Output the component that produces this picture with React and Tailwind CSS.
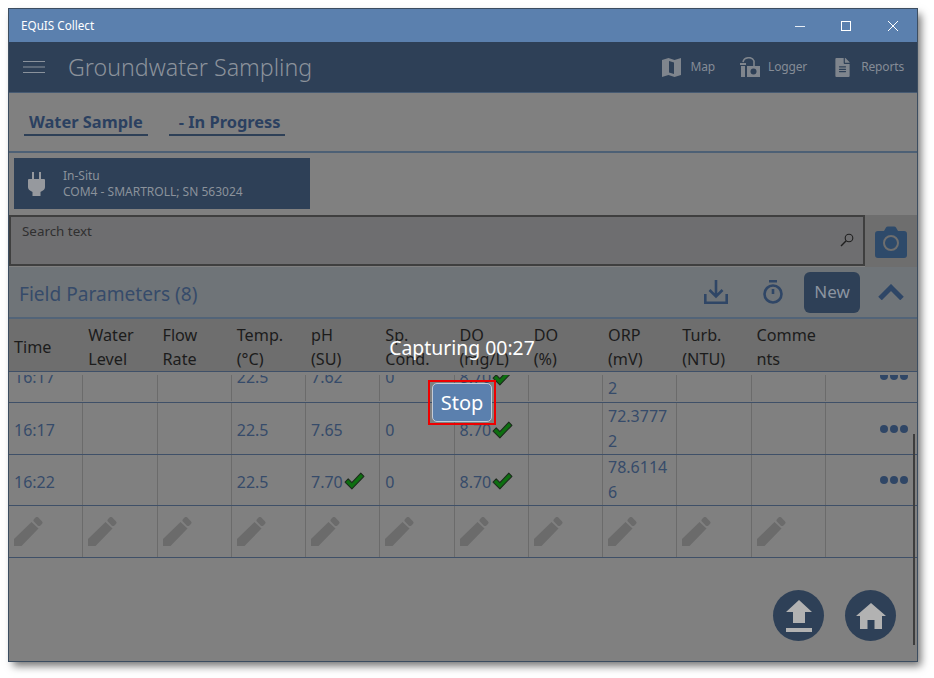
import { FaFileAlt } from 'react-icons/fa';

const font = { fontFamily: '"Noto Sans", "Open Sans", sans-serif' };

const headers = [
  ['Time'],
  ['Water', 'Level'],
  ['Flow', 'Rate'],
  ['Temp.', '(°C)'],
  ['pH', '(SU)'],
  ['Sp.', 'Cond.'],
  ['DO', '(mg/L)'],
  ['DO', '(%)'],
  ['ORP', '(mV)'],
  ['Turb.', '(NTU)'],
  ['Comme', 'nts'],
  [],
];

const rows = [
  { time: '16:17', temp: '22.5', ph: '7.62', cond: '0', doVal: '8.70', orp: ['', '2'], phOk: false },
  { time: '16:17', temp: '22.5', ph: '7.65', cond: '0', doVal: '8.70', orp: ['72.3777', '2'], phOk: false },
  { time: '16:22', temp: '22.5', ph: '7.70', cond: '0', doVal: '8.70', orp: ['78.6114', '6'], phOk: true },
];

const gridCols = 'grid grid-cols-[repeat(11,74.25px)_1fr]';

function Check() {
  return (
    <svg width="21" height="18" viewBox="0 0 20 17" className="ml-[1px] -mt-[2px] shrink-0">
      <path
        d="M1 9.5 L4 6.5 L7.5 10 L16 1 L19 4 L7.5 16 Z"
        fill="#0d6f10"
        stroke="#1c2a1c"
        strokeWidth="1"
        strokeLinejoin="round"
      />
    </svg>
  );
}

function Pencil() {
  return (
    <svg width="30" height="30" viewBox="0 0 30 30">
      <path d="M0 22 L17.5 5 L24.5 11.5 L7.5 29 L0 29 Z" fill="#6b6b6b" />
      <rect x="19.5" y="1.5" width="9" height="6" rx="2" transform="rotate(45 24 4.5)" fill="#6b6b6b" />
    </svg>
  );
}

function Dots() {
  return (
    <svg width="30" height="10" viewBox="0 0 30 10">
      <circle cx="5" cy="5" r="4" fill="#2f4666" />
      <circle cx="15" cy="5" r="4" fill="#2f4666" />
      <circle cx="25" cy="5" r="4" fill="#2f4666" />
    </svg>
  );
}

function Cell({ children, className = '' }) {
  return (
    <div className={`border-r border-[#6b6b6b] pl-[5px] pt-[4px] flex items-center text-[16px] leading-[25px] text-[#364b6a] ${className}`}>
      {children}
    </div>
  );
}

function DataRow({ row, height = 'h-[51px]' }) {
  return (
    <div className={`${gridCols} ${height} shrink-0`}>
      <Cell>{row.time}</Cell>
      <Cell />
      <Cell />
      <Cell>{row.temp}</Cell>
      <Cell>
        {row.ph}
        {row.phOk && <Check />}
      </Cell>
      <Cell>{row.cond}</Cell>
      <Cell>
        {row.doVal}
        <Check />
      </Cell>
      <Cell />
      <Cell>
        <div className="-mt-[4px]">
          <div className="h-[25px]">{row.orp[0]}</div>
          <div className="h-[25px]">{row.orp[1]}</div>
        </div>
      </Cell>
      <Cell />
      <Cell />
      <div className="flex items-center justify-end pr-[8px]">
        <Dots />
      </div>
    </div>
  );
}

export default function App() {
  return (
    <div className="w-[934px] h-[678px] bg-white pt-[9px] pl-[9px]" style={font}>
      <div className="relative w-[908px] h-[652px] flex flex-col bg-[#808080] outline outline-1 outline-[#3c4d60] shadow-[4px_5px_8px_rgba(0,0,0,0.55)] overflow-hidden">
        {/* Title bar */}
        <div className="h-[33px] shrink-0 bg-[#5b80ae] flex items-center justify-between pl-[12px]">
          <span className="text-[11.7px] text-white">EQuIS Collect</span>
          <div className="flex items-center text-white">
            <div className="w-[46px] flex justify-center">
              <svg width="12" height="12" viewBox="0 0 12 12"><path d="M1 6.5 H11" stroke="#e6ecf4" strokeWidth="1" /></svg>
            </div>
            <div className="w-[46px] flex justify-center">
              <svg width="12" height="12" viewBox="0 0 12 12"><rect x="1.5" y="1.5" width="9" height="9" fill="none" stroke="#fff" strokeWidth="1" /></svg>
            </div>
            <div className="w-[48px] flex justify-center">
              <svg width="12" height="12" viewBox="0 0 12 12"><path d="M1 1 L11 11 M11 1 L1 11" stroke="#fff" strokeWidth="1" /></svg>
            </div>
          </div>
        </div>

        {/* App header */}
        <div className="h-[51px] shrink-0 bg-[#2e4057] flex items-center justify-between border-b border-[#465a72]">
          <div className="flex items-center">
            <svg width="22" height="14" viewBox="0 0 22 14" className="ml-[14px]">
              <path d="M0 1.5 H22 M0 7 H22 M0 12.5 H22" stroke="#8a929c" strokeWidth="1" />
            </svg>
            <h1 className="ml-[23px] mt-[1px] text-[23.2px] font-light text-[#8b929b] leading-none">Groundwater Sampling</h1>
          </div>
          <div className="flex items-center text-[#858c96] text-[12px] tracking-[-0.15px] pr-[13px]">
            <svg width="19" height="19" viewBox="0 0 19 19">
              <path d="M0 2 L6.5 0 L12.5 2 L19 0 V17 L12.5 19 L6.5 17 L0 19 Z" fill="#7f858d" />
              <path d="M7 3 L12 4.5 V16 L7 14.5 Z" fill="#2e4057" />
            </svg>
            <span className="ml-[9px]">Map</span>
            <svg width="21" height="21" viewBox="0 0 21 21" className="ml-[25px]">
              <rect x="1" y="9" width="4" height="11" fill="#7f858d" />
              <rect x="0" y="6" width="6" height="2" fill="#7f858d" />
              <path d="M3 5 C4 0 12 -1 14 4 L14 9" fill="none" stroke="#7f858d" strokeWidth="1.6" />
              <rect x="7" y="9" width="13" height="11" fill="#7f858d" />
              <circle cx="13.5" cy="14.5" r="3" fill="#2e4057" />
            </svg>
            <span className="ml-[7px]">Logger</span>
            <FaFileAlt size={19} className="ml-[26px] text-[#7f858d]" />
            <span className="ml-[9px]">Reports</span>
          </div>
        </div>

        {/* Tabs */}
        <div className="h-[60px] shrink-0 flex items-start pt-[17px] pl-[15px] gap-[21px] border-b-2 border-[#4d6075]">
          <div className="h-[26px] px-[5px] border-b-2 border-[#2e4057] text-[16.4px] font-bold text-[#2b4060] leading-[23px]">Water Sample</div>
          <div className="h-[26px] pl-[10px] pr-[4px] border-b-2 border-[#2e4057] text-[16.4px] font-bold text-[#2b4060] leading-[23px]">- In Progress</div>
        </div>

        {/* Connected device */}
        <div className="h-[62px] shrink-0 pt-[5px] pl-[5px]">
          <div className="w-[296px] h-[51px] bg-[#2e4057] flex items-center">
            <svg width="17" height="24" viewBox="0 0 17 24" className="ml-[14px]">
              <path d="M4 0 H6 V7 H11 V0 H13 V7 H16 Q17 7 17 8 V15 C17 18 14 19 12.5 20 V24 H4.5 V20 C3 19 0 18 0 15 V8 Q0 7 1 7 H4 Z" fill="#96999e" />
            </svg>
            <div className="ml-[18px] text-[12px] leading-[16px] text-[#8b929b]">
              <div>In-Situ</div>
              <div>COM4 - SMARTROLL; SN 563024</div>
            </div>
          </div>
        </div>

        {/* Search */}
        <div className="h-[52px] shrink-0 flex">
          <div className="w-[856px] h-[51px] relative border-[2px] border-[#3f3f3f] bg-[#6e6e70] pl-[11px] pt-[4px] text-[13.4px] text-[#303030]">
            Search text
            <svg width="14" height="14" viewBox="0 0 14 14" className="absolute right-[9px] top-[16px]">
              <circle cx="9" cy="5" r="3.8" fill="none" stroke="#1f1f1f" strokeWidth="1.1" />
              <path d="M6.2 7.8 L1 13" stroke="#1f1f1f" strokeWidth="1.4" />
            </svg>
          </div>
          <div className="flex-1 bg-[#6e6e6e] flex items-center justify-center">
            <svg width="32" height="32" viewBox="0 0 32 32" className="mt-[2px]">
              <path d="M3 5 H9 L11 1.5 Q11.5 0.5 13 0.5 H19 Q20.5 0.5 21 1.5 L23 5 H29 Q32 5 32 8 V29 Q32 32 29 32 H3 Q0 32 0 29 V8 Q0 5 3 5 Z" fill="#2e4a6a" />
              <circle cx="16" cy="17" r="7" fill="none" stroke="#6e6e6e" strokeWidth="2" />
            </svg>
          </div>
        </div>

        {/* Field parameters title */}
        <div className="h-[52px] shrink-0 bg-[#6f7478] flex items-center justify-between border-b-2 border-[#526478]">
          <h2 className="ml-[10px] mt-[5px] text-[19.1px] text-[#364b6a]">Field Parameters (8)</h2>
          <div className="flex items-center">
            <svg width="24" height="24" viewBox="0 0 24 24" fill="none" stroke="#2f4666" strokeWidth="2.6">
              <path d="M12 0 V16 M5.5 10 L12 16.5 L18.5 10 M1.3 14 V22.7 H22.7 V14" />
            </svg>
            <svg width="20" height="24" viewBox="0 0 20 24" fill="none" stroke="#2f4666" strokeWidth="2.6" className="ml-[35px]">
              <circle cx="10" cy="14" r="8.5" />
              <path d="M6 1.3 H14 M10 9 V14" />
            </svg>
            <div className="ml-[21px] w-[56px] h-[41px] rounded-[6px] bg-[#2e4057] text-[#8b94a0] text-[17px] flex items-center justify-center">New</div>
            <svg width="26" height="16" viewBox="0 0 26 16" className="ml-[18px] mr-[13px]">
              <path d="M2 14.5 L13 3.5 L24 14.5" fill="none" stroke="#2e4666" strokeWidth="5" />
            </svg>
          </div>
        </div>

        {/* Table header */}
        <div className={`${gridCols} h-[53px] shrink-0 pt-[4px] bg-[#6e6e6e] border-b border-[#3f5068] text-[16.2px] leading-[24px] text-[#1c1c1c]`}>
          {headers.map((lines, i) => (
            <div key={i} className="pl-[5px] flex flex-col justify-center">
              {lines.map((line) => (
                <span key={line} className="whitespace-nowrap">{line}</span>
              ))}
            </div>
          ))}
        </div>

        {/* Rows */}
        <div className="mt-[3px] h-[28px] shrink-0 overflow-hidden border-b border-[#3f5068]">
          <div className="-mt-[25px]">
            <DataRow row={rows[0]} />
          </div>
        </div>
        <div className="shrink-0 border-b border-[#3f5068]"><DataRow row={rows[1]} /></div>
        <div className="shrink-0 border-b border-[#3f5068]"><DataRow row={rows[2]} height="h-[50px]" /></div>
        <div className={`${gridCols} h-[52px] shrink-0 border-b border-[#3f5068]`}>
          {headers.slice(0, 11).map((_, i) => (
            <div key={i} className="border-r border-[#6b6b6b] pl-[5px] flex items-center">
              <Pencil />
            </div>
          ))}
        </div>

        {/* Floating actions */}
        <div className="flex-1 flex items-end justify-end gap-[21px] pr-[21px] pb-[20px]">
          <div className="w-[51px] h-[51px] rounded-full bg-[#2e4057] flex items-center justify-center">
            <svg width="28" height="34" viewBox="0 0 28 34">
              <path d="M14 1 L27 13 L20 13 L20 24 L8 24 L8 13 L1 13 Z M1 29 H27 V33 H1 Z" fill="#b2b2b2" />
            </svg>
          </div>
          <div className="w-[51px] h-[51px] rounded-full bg-[#2e4057] flex items-center justify-center">
            <svg width="32" height="28" viewBox="0 0 32 28">
              <path d="M16 1 L31 14 L27 14 L27 27 L19.5 27 L19.5 18 L12.5 18 L12.5 27 L5 27 L5 14 L1 14 Z" fill="#b2b2b2" />
            </svg>
          </div>
        </div>

        {/* Scrollbar */}
        <div className="absolute left-[904px] top-[425px] w-[2px] h-[211px] bg-[#3d3d3d]" />

        {/* Capture overlay */}
        <div className="absolute left-[353px] top-[326px] w-[200px] flex flex-col items-center">
          <div className="text-[19.4px] leading-[26px] text-white whitespace-nowrap">Capturing 00:27</div>
          <div className="mt-[19px] border-[2px] border-[#ee0000] px-[2px] py-[1px]">
            <button className="w-[60px] h-[39px] rounded-[5px] bg-[#5b80ae] border border-[#c3ccd8] text-white text-[20px] flex items-center justify-center">
              Stop
            </button>
          </div>
        </div>
      </div>
    </div>
  );
}
